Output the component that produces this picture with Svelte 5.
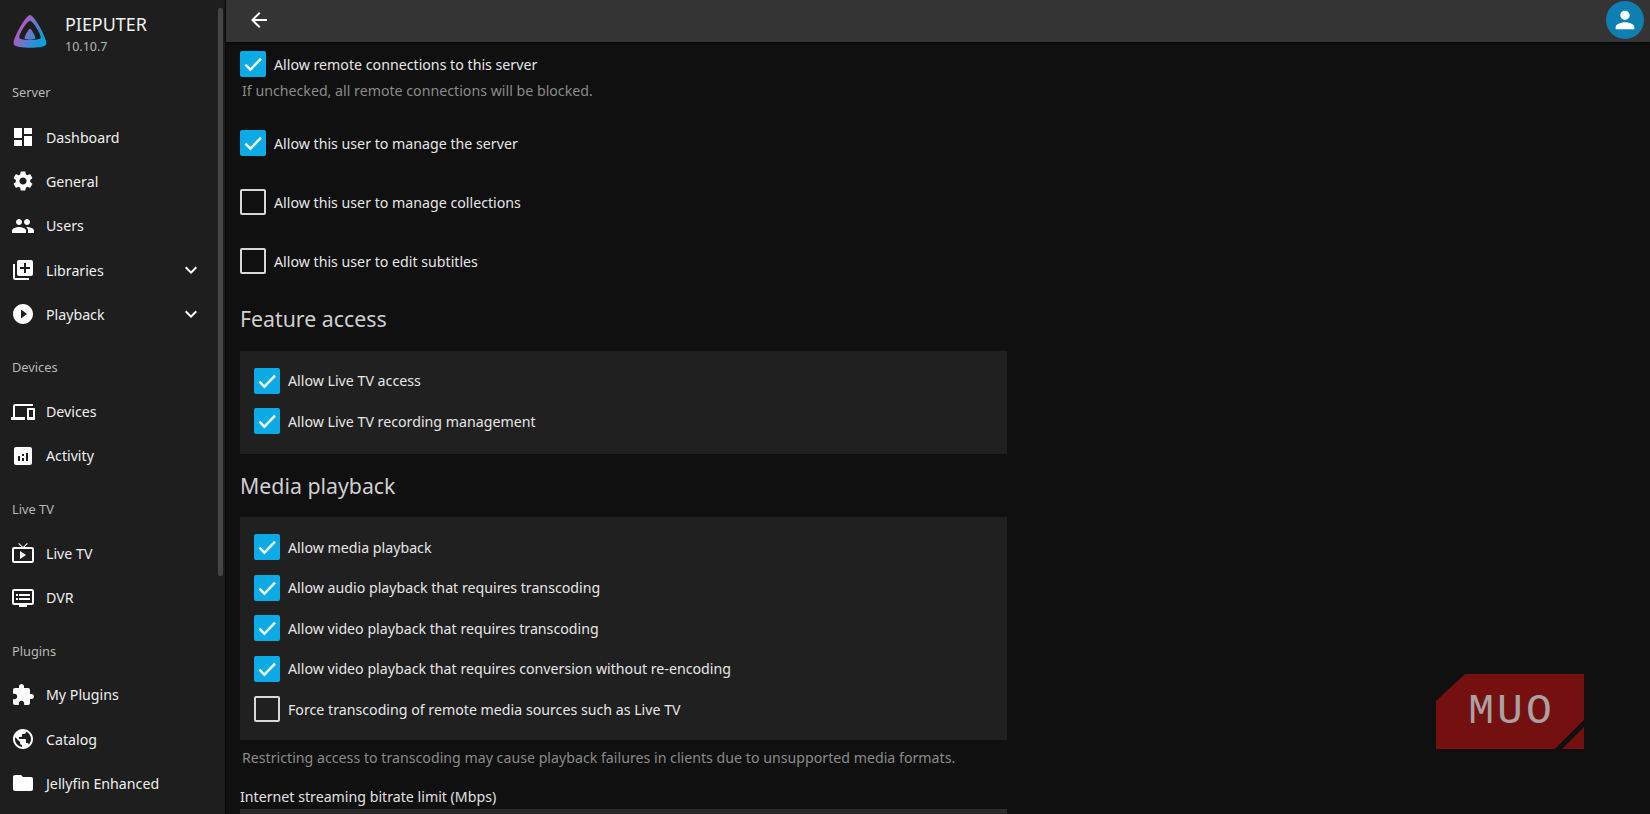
<script lang="ts">
const icons: Record<string, string> = {
	dashboard: 'M3 13h8V3H3v10zm0 8h8v-6H3v6zm10 0h8V11h-8v10zm0-18v6h8V3h-8z',
	settings: 'M19.14 12.94c.04-.3.06-.61.06-.94 0-.32-.02-.64-.07-.94l2.03-1.58c.18-.14.23-.41.12-.61l-1.92-3.32c-.12-.22-.37-.29-.59-.22l-2.39.96c-.5-.38-1.03-.7-1.62-.94l-.36-2.54c-.04-.24-.24-.41-.48-.41h-3.84c-.24 0-.43.17-.47.41l-.36 2.54c-.59.24-1.13.57-1.62.94l-2.39-.96c-.22-.08-.47 0-.59.22L2.74 8.87c-.12.21-.08.47.12.61l2.03 1.58c-.05.3-.09.63-.09.94s.02.64.07.94l-2.03 1.58c-.18.14-.23.41-.12.61l1.92 3.32c.12.22.37.29.59.22l2.39-.96c.5.38 1.03.7 1.62.94l.36 2.54c.05.24.24.41.48.41h3.84c.24 0 .44-.17.47-.41l.36-2.54c.59-.24 1.13-.56 1.62-.94l2.39.96c.22.08.47 0 .59-.22l1.92-3.32c.12-.22.07-.47-.12-.61l-2.01-1.58zM12 15.6c-1.98 0-3.6-1.62-3.6-3.6s1.62-3.6 3.6-3.6 3.6 1.62 3.6 3.6-1.62 3.6-3.6 3.6z',
	people: 'M16 11c1.66 0 2.99-1.34 2.99-3S17.66 5 16 5c-1.66 0-3 1.34-3 3s1.34 3 3 3zm-8 0c1.66 0 2.99-1.34 2.99-3S9.66 5 8 5C6.34 5 5 6.34 5 8s1.34 3 3 3zm0 2c-2.33 0-7 1.17-7 3.5V19h14v-2.5c0-2.33-4.67-3.5-7-3.5zm8 0c-.29 0-.62.02-.97.05 1.16.84 1.97 1.97 1.97 3.45V19h6v-2.5c0-2.33-4.67-3.5-7-3.5z',
	libraryAdd: 'M4 6H2v14c0 1.1.9 2 2 2h14v-2H4V6zm16-4H8c-1.1 0-2 .9-2 2v12c0 1.1.9 2 2 2h12c1.1 0 2-.9 2-2V4c0-1.1-.9-2-2-2zm-1 9h-4v4h-2v-4H9V9h4V5h2v4h4v2z',
	play: 'M12 2C6.48 2 2 6.48 2 12s4.48 10 10 10 10-4.48 10-10S17.52 2 12 2zm-2 14.5v-9l6 4.5-6 4.5z',
	devices: 'M4 6h18V4H4c-1.1 0-2 .9-2 2v11H0v3h14v-3H4V6zm19 2h-6c-.55 0-1 .45-1 1v10c0 .55.45 1 1 1h6c.55 0 1-.45 1-1V9c0-.55-.45-1-1-1zm-1 9h-4v-7h4v7z',
	assessment: 'M19 3H5c-1.1 0-2 .9-2 2v14c0 1.1.9 2 2 2h14c1.1 0 2-.9 2-2V5c0-1.1-.9-2-2-2zM9 17H7v-5h2v5zm4 0h-2v-3h2v3zm0-5h-2v-2h2v2zm4 5h-2V9h2v8z',
	liveTv: 'M21 6h-7.59l3.29-3.29L16 2l-4 4-4-4-.71.71L10.59 6H3c-1.1 0-2 .89-2 2v12c0 1.1.9 2 2 2h18c1.1 0 2-.9 2-2V8c0-1.11-.9-2-2-2zm0 14H3V8h18v12zM9 10v8l6-4z',
	dvr: 'M21 3H3c-1.1 0-2 .9-2 2v12c0 1.1.9 2 2 2h5v2h8v-2h5c1.1 0 1.99-.9 1.99-2L23 5c0-1.1-.9-2-2-2zm0 14H3V5h18v12zm-2-9H8v2h11V8zm0 4H8v2h11v-2zM7 8H5v2h2V8zm0 4H5v2h2v-2z',
	extension: 'M20.5 11H19V7c0-1.1-.9-2-2-2h-4V3.5C13 2.12 11.88 1 10.5 1S8 2.12 8 3.5V5H4c-1.1 0-1.99.9-1.99 2v3.8H3.5c1.49 0 2.7 1.21 2.7 2.7s-1.21 2.7-2.7 2.7H2V20c0 1.1.9 2 2 2h3.8v-1.5c0-1.49 1.21-2.7 2.7-2.7 1.49 0 2.7 1.21 2.7 2.7V22H17c1.1 0 2-.9 2-2v-4h1.5c1.38 0 2.5-1.12 2.5-2.5S21.88 11 20.5 11z',
	public: 'M12 2C6.48 2 2 6.48 2 12s4.48 10 10 10 10-4.48 10-10S17.52 2 12 2zm-1 17.93c-3.95-.49-7-3.85-7-7.93 0-.62.08-1.21.21-1.79L9 15v1c0 1.1.9 2 2 2v1.93zm6.9-2.54c-.26-.81-1-1.39-1.9-1.39h-1v-3c0-.55-.45-1-1-1H8v-2h2c.55 0 1-.45 1-1V7h2c1.1 0 2-.9 2-2v-.41c2.93 1.19 5 4.06 5 7.41 0 2.08-.8 3.97-2.1 5.39z',
	folder: 'M10 4H4c-1.1 0-1.99.9-1.99 2L2 18c0 1.1.9 2 2 2h16c1.1 0 2-.9 2-2V8c0-1.1-.9-2-2-2h-8l-2-2z'
};

interface NavItem {
	label: string;
	icon: string;
	more?: boolean;
}

const nav: { title: string; items: NavItem[] }[] = [
	{
		title: 'Server',
		items: [
			{ label: 'Dashboard', icon: 'dashboard' },
			{ label: 'General', icon: 'settings' },
			{ label: 'Users', icon: 'people' },
			{ label: 'Libraries', icon: 'libraryAdd', more: true },
			{ label: 'Playback', icon: 'play', more: true }
		]
	},
	{
		title: 'Devices',
		items: [
			{ label: 'Devices', icon: 'devices' },
			{ label: 'Activity', icon: 'assessment' }
		]
	},
	{
		title: 'Live TV',
		items: [
			{ label: 'Live TV', icon: 'liveTv' },
			{ label: 'DVR', icon: 'dvr' }
		]
	},
	{
		title: 'Plugins',
		items: [
			{ label: 'My Plugins', icon: 'extension' },
			{ label: 'Catalog', icon: 'public' },
			{ label: 'Jellyfin Enhanced', icon: 'folder' }
		]
	}
];

const featureAccess = [
	{ label: 'Allow Live TV access', on: true },
	{ label: 'Allow Live TV recording management', on: true }
];

const mediaPlayback = [
	{ label: 'Allow media playback', on: true },
	{ label: 'Allow audio playback that requires transcoding', on: true },
	{ label: 'Allow video playback that requires transcoding', on: true },
	{ label: 'Allow video playback that requires conversion without re-encoding', on: true },
	{ label: 'Force transcoding of remote media sources such as Live TV', on: false }
];
</script>

{#snippet check(label: string, on: boolean)}
	<div class="check">
		<span class="box" class:on>
			{#if on}
				<svg viewBox="0 0 24 24" width="26" height="26" aria-hidden="true">
					<path d="M5 12.6l4.6 4.6L19.4 7" fill="none" stroke="#eefaff" stroke-width="2.3" />
				</svg>
			{/if}
		</span>
		<span>{label}</span>
	</div>
{/snippet}

<div class="page">
	<aside class="drawer">
		<div class="brand">
			<svg class="logo" viewBox="0 0 512 512" aria-hidden="true">
				<defs>
					<linearGradient id="jf" gradientUnits="userSpaceOnUse" x1="110" y1="220" x2="424" y2="398">
						<stop offset="0" stop-color="#aa5cc3" />
						<stop offset="1" stop-color="#00a4dc" />
					</linearGradient>
				</defs>
				<path
					fill="url(#jf)"
					d="M256 196.2c-20.4 0-86.2 119.3-76.2 139.4s142.5 19.9 152.4 0S276.5 196.2 256 196.2z"
				/>
				<path
					fill="url(#jf)"
					fill-rule="evenodd"
					d="M256 0C194.4 0-4.1 360.1 26.1 420.8s430.2 60 459.9 0S317.6 0 256 0zm150.8 327.6c-19.4 39.3-281.1 39.8-300.9 0S215.7 82.1 256 82.1s170.2 206.4 150.8 245.5z"
				/>
			</svg>
			<div>
				<div class="server-name">PIEPUTER</div>
				<div class="version">10.10.7</div>
			</div>
		</div>

		{#each nav as group (group.title)}
			<div class="group-title">{group.title}</div>
			{#each group.items as item (item.label)}
				<div class="nav-item">
					<svg viewBox="0 0 24 24" width="24" height="24" fill="#fff" aria-hidden="true">
						<path d={icons[item.icon]} />
					</svg>
					<span class="nav-label">{item.label}</span>
					{#if item.more}
						<svg class="chevron" viewBox="0 0 24 24" width="24" height="24" fill="#fff" aria-hidden="true">
							<path d="M7.41 8.59L12 13.17l4.59-4.58L18 10l-6 6-6-6z" />
						</svg>
					{/if}
				</div>
			{/each}
		{/each}

		<div class="scrollbar"><div class="thumb"></div></div>
	</aside>

	<div class="main">
		<header class="topbar">
			<svg class="back" viewBox="0 0 24 24" width="24" height="24" fill="#fff" aria-hidden="true">
				<path d="M20 11H7.83l5.59-5.59L12 4l-8 8 8 8 1.41-1.41L7.83 13H20v-2z" />
			</svg>
			<span class="avatar">
				<svg viewBox="0 0 24 24" width="28" height="28" fill="#fff" aria-hidden="true">
					<path d="M12 12c2.21 0 4-1.79 4-4s-1.79-4-4-4-4 1.79-4 4 1.79 4 4 4zm0 2c-2.67 0-8 1.34-8 4v2h16v-2c0-2.66-5.33-4-8-4z" />
				</svg>
			</span>
		</header>

		<div class="content">
			{@render check('Allow remote connections to this server', true)}
			<p class="hint first-hint">If unchecked, all remote connections will be blocked.</p>
			<div class="top-check">{@render check('Allow this user to manage the server', true)}</div>
			<div class="top-check">{@render check('Allow this user to manage collections', false)}</div>
			<div class="top-check">{@render check('Allow this user to edit subtitles', false)}</div>

			<h2>Feature access</h2>
			<div class="panel short">
				{#each featureAccess as c (c.label)}
					{@render check(c.label, c.on)}
				{/each}
			</div>

			<h2>Media playback</h2>
			<div class="panel">
				{#each mediaPlayback as c (c.label)}
					{@render check(c.label, c.on)}
				{/each}
			</div>
			<p class="hint">Restricting access to transcoding may cause playback failures in clients due to unsupported media formats.</p>
			<div class="field-label">Internet streaming bitrate limit (Mbps)</div>
			<div class="input"></div>
		</div>

		<div class="watermark">
			<span>MUO</span>
			<i></i>
		</div>
	</div>
</div>

<style>
	:global(body) {
		margin: 0;
		background: #101010;
	}

	.page {
		display: grid;
		grid-template-columns: 226px 1fr;
		height: 814px;
		overflow: hidden;
		font-family: 'Noto Sans', sans-serif;
		color: #e4e4e4;
	}

	.drawer {
		position: relative;
		background: #1e1e1e;
		overflow: hidden;
	}

	.brand {
		display: flex;
		gap: 17px;
		height: 69px;
		padding: 15px 0 0 12px;
		box-sizing: border-box;
	}

	.logo {
		width: 36px;
		height: 36px;
	}

	.server-name {
		font-size: 17.9px;
		line-height: 20px;
		margin-top: -1px;
		color: #f2f2f2;
	}

	.version {
		font-size: 12.5px;
		line-height: 18px;
		margin-top: 4px;
		color: #b4b4b4;
	}

	.group-title {
		height: 46px;
		padding-left: 12px;
		box-sizing: border-box;
		font-size: 12.8px;
		line-height: 46px;
		color: #b8b8b8;
	}

	.nav-item + .group-title {
		height: 53px;
		padding-top: 9px;
		line-height: 44px;
	}

	.nav-item {
		display: flex;
		align-items: center;
		height: 44.3px;
		padding-left: 11px;
	}

	.nav-label {
		margin-left: 11px;
		font-size: 14.2px;
		color: #efefef;
	}

	.chevron {
		margin-left: auto;
		margin-right: 23px;
	}

	.scrollbar {
		position: absolute;
		top: 0;
		bottom: 0;
		right: 3px;
		width: 5px;
	}

	.thumb {
		margin-top: 8px;
		height: 568px;
		border-radius: 2px;
		background: #454545;
	}

	.main {
		position: relative;
		min-width: 0;
		border-left: 1px solid #0a0a0a;
		margin-left: -1px;
	}

	.topbar {
		display: flex;
		align-items: center;
		justify-content: space-between;
		height: 42px;
		padding: 0 6px 0 21px;
		background: #343434;
		box-shadow: 0 1px 3px rgba(0, 0, 0, 0.6);
	}

	.back {
		margin-top: -3px;
	}

	.avatar {
		display: flex;
		align-items: center;
		justify-content: center;
		width: 38px;
		height: 38px;
		margin-top: -3px;
		border-radius: 50%;
		background: #0f7fb2;
	}

	.content {
		width: 767px;
		padding: 9px 0 0 14px;
	}

	.check {
		display: flex;
		align-items: center;
		gap: 8px;
		height: 26px;
		font-size: 14.2px;
		color: #e6e6e6;
	}

	.box {
		display: flex;
		align-items: center;
		justify-content: center;
		flex: none;
		width: 26px;
		height: 26px;
		box-sizing: border-box;
		border: 2px solid #d8d8d8;
		border-radius: 2px;
	}

	.box.on {
		border-color: #0cabe6;
		background: #0cabe6;
	}

	.box svg {
		flex: none;
	}

	.hint {
		margin: 0;
		padding-left: 2px;
		font-size: 14.2px;
		line-height: 20px;
		color: #8a8a8a;
	}

	.first-hint {
		margin-top: 4px;
		margin-bottom: 29px;
	}

	.top-check + .top-check {
		margin-top: 33px;
	}

	h2 {
		margin: 31px 0 17.5px;
		font-size: 21.3px;
		font-weight: 400;
		line-height: 28px;
		color: #cfcfcf;
	}

	.panel {
		display: flex;
		flex-direction: column;
		gap: 14.5px;
		padding: 17px 14px 18px;
		background: #202020;
	}

	.panel.short {
		padding-bottom: 19.5px;
	}

	.panel + h2 {
		margin-top: 18px;
	}

	.panel + .hint {
		margin-top: 8px;
	}

	.field-label {
		margin-top: 19px;
		font-size: 14.2px;
		line-height: 20px;
		color: #e0e0e0;
	}

	.input {
		height: 40px;
		margin-top: 2px;
		background: #2a2a2a;
	}

	.watermark {
		position: absolute;
		left: 1210px;
		top: 674px;
		width: 148px;
		height: 75px;
		display: flex;
		align-items: center;
		justify-content: center;
		overflow: hidden;
		background: #741010;
		clip-path: polygon(29px 0, 100% 0, 100% 100%, 0 100%, 0 27px);
	}

	.watermark span {
		margin-left: 3px;
		font-family: 'Liberation Mono', monospace;
		font-size: 43px;
		letter-spacing: 3px;
		line-height: 1;
		color: #aaa2a2;
	}

	.watermark i {
		position: absolute;
		left: 133px;
		top: 42px;
		width: 5px;
		height: 40px;
		background: #101010;
		transform: rotate(45deg);
	}
</style>
